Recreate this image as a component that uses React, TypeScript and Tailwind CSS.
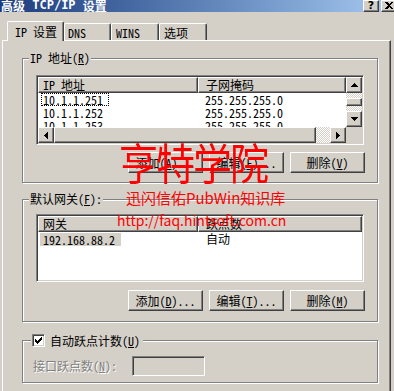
import React from "react";

const font = "font-['Noto_Sans_Mono_CJK_SC','Noto_Sans_CJK_SC',sans-serif]";
const raised =
  "border border-t-white border-l-white border-r-[#404040] border-b-[#404040] shadow-[inset_-1px_-1px_0_#808080] bg-[#d4d0c8]";
const sunken =
  "border border-t-[#808080] border-l-[#808080] border-r-white border-b-white shadow-[inset_1px_1px_0_#404040,inset_-1px_-1px_0_#d4d0c8] p-px";
const dither = "[background:repeating-conic-gradient(#fff_0%_25%,#d4d0c8_0%_50%)_0_0/2px_2px]";

const arrows = {
  up: { w: 7, h: 4, d: "M3 0h1v1h1v1h1v1h1v1H0V3h1V2h1V1h1z" },
  down: { w: 7, h: 4, d: "M0 0h7v1H6v1H5v1H4v1H3V3H2V2H1V1H0z" },
  left: { w: 4, h: 7, d: "M3 0h1v7H3V6H2V5H1V4H0V3h1V2h1V1h1z" },
  right: { w: 4, h: 7, d: "M0 0h1v1h1v1h1v1h1v1H3v1H2v1H1v1H0z" },
};

function ScrollBtn({ dir }: { dir: keyof typeof arrows }) {
  const a = arrows[dir];
  return (
    <div className={`${raised} w-[16px] h-[16px] shrink-0 flex items-center justify-center`}>
      <svg width={a.w} height={a.h} viewBox={`0 0 ${a.w} ${a.h}`} shapeRendering="crispEdges">
        <path d={a.d} fill="#000" />
      </svg>
    </div>
  );
}

function Key({ k }: { k: string }) {
  return (
    <>
      (<u className="underline-offset-[1px]">{k}</u>)
    </>
  );
}

function Btn({ label, k, dots }: { label: string; k: string; dots?: boolean }) {
  return (
    <div className={`${raised} w-[75px] h-[21px] flex items-center justify-center`}>
      {label}
      <Key k={k} />
      {dots ? "..." : ""}
    </div>
  );
}

function HeaderCell({ text, className }: { text: string; className: string }) {
  return <div className={`${raised} h-[16px] flex items-center ${className}`}>{text}</div>;
}

function Group({
  legend,
  legendClass,
  className,
  children,
}: {
  legend: React.ReactNode;
  legendClass: string;
  className: string;
  children: React.ReactNode;
}) {
  return (
    <fieldset
      className={`ml-[19px] w-[356px] border border-[#808080] shadow-[inset_1px_1px_0_#fff,1px_1px_0_#fff] ${className}`}
    >
      <legend className={`bg-[#d4d0c8] leading-[12px] ${legendClass}`}>{legend}</legend>
      {children}
    </fieldset>
  );
}

function Check() {
  const px = [
    [6, 0], [5, 1], [6, 1], [0, 2], [4, 2], [5, 2], [6, 2],
    [0, 3], [1, 3], [3, 3], [4, 3], [5, 3],
    [0, 4], [1, 4], [2, 4], [3, 4], [4, 4],
    [1, 5], [2, 5], [3, 5], [2, 6],
  ];
  return (
    <div className={`${sunken} w-[13px] h-[13px] bg-white flex items-center justify-center`}>
      <svg width="7" height="7" viewBox="0 0 7 7" shapeRendering="crispEdges">
        {px.map(([x, y]) => (
          <rect key={`${x}-${y}`} x={x} y={y} width="1" height="1" fill="#000" />
        ))}
      </svg>
    </div>
  );
}

const ipRows = ["10.1.1.251", "10.1.1.252", "10.1.1.253"];

export default function App() {
  return (
    <div
      className={`${font} relative w-[394px] h-[391px] overflow-hidden bg-[#d4d0c8] text-[12px] leading-[12px] text-black`}
    >
      {/* title bar */}
      <div className="h-[12px] flex items-end bg-linear-to-r from-[#1c3b7d] to-[#a6caf0]">
        <div className="self-start pl-px font-bold text-white whitespace-pre flex leading-[11px]">
          <span>高级</span>
          <span className="font-['DejaVu_Sans_Mono',monospace]"> TCP/IP </span>
          <span>设置</span>
        </div>
        <div className="ml-auto flex gap-[2px] pl-[2px]">
          <div className={`${raised} w-[16px] h-[12px] flex items-end justify-center font-['DejaVu_Sans',sans-serif] font-bold text-[11px] leading-[11px]`}>
            ?
          </div>
          <div className={`${raised} w-[16px] h-[12px] flex items-end justify-center pb-[2px] -mr-[3px]`}>
            <svg width="8" height="7" viewBox="0 0 8 7" shapeRendering="crispEdges">
              <path d="M0 0h2l2 2 2-2h2L5 3.5 8 7H6L4 5 2 7H0l3-3.5z" fill="#000" />
            </svg>
          </div>
        </div>
      </div>

      {/* tabs */}
      <div className="flex items-end h-[28px] pl-[7px]">
        <div className="relative z-10 -mb-px h-[20px] w-[57px] bg-[#d4d0c8] border-t border-l border-r border-t-white border-l-white border-r-[#404040] shadow-[inset_-1px_0_0_#808080] rounded-t-[2px] pt-[4px] pl-[7px] whitespace-pre">
          IP 设置
        </div>
        <div className="h-[17px] w-[47px] border-t border-l border-r border-t-white border-l-white border-r-[#404040] shadow-[inset_-1px_0_0_#808080] rounded-t-[2px] pt-[3px] pl-[3px]">
          DNS
        </div>
        <div className="h-[17px] w-[48px] border-t border-l border-r border-t-white border-l-white border-r-[#404040] shadow-[inset_-1px_0_0_#808080] rounded-t-[2px] pt-[3px] pl-[4px]">
          WINS
        </div>
        <div className="h-[17px] w-[48px] border-t border-l border-r border-t-white border-l-white border-r-[#404040] shadow-[inset_-1px_0_0_#808080] rounded-t-[2px] pt-[3px] pl-[4px]">
          选项
        </div>
      </div>

      {/* panel */}
      <div className="ml-[2px] w-[389px] h-[360px] border-t border-l border-r border-t-white border-l-white border-r-[#404040] shadow-[inset_-1px_0_0_#808080]">
        {/* IP addresses */}
        <Group
          className="mt-[11px]"
          legendClass="ml-[6px] px-px whitespace-pre"
          legend={
            <>
              IP 地址<Key k="R" />
            </>
          }
        >
          <div className="px-[13px] pt-[11px] pb-[9px]">
            <div className={`${sunken} bg-white w-[328px] h-[70px] flex flex-col`}>
              <div className="flex h-[50px]">
                <div className="w-[308px] flex flex-col overflow-hidden">
                  <div className="flex shrink-0">
                    <HeaderCell text="IP 地址" className="w-[160px] pl-[4px] whitespace-pre" />
                    <HeaderCell text="子网掩码" className="flex-1 pl-[7px]" />
                  </div>
                  {ipRows.map((ip, i) => (
                    <div key={ip} className="flex h-[13px] shrink-0 items-center">
                      <div className="w-[160px] pl-[3px]">
                        <span
                          className={`inline-block pl-px pr-[5px] leading-[11px] border ${
                            i === 0 ? "border-dotted border-black" : "border-transparent"
                          }`}
                        >
                          {ip}
                        </span>
                      </div>
                      <div className="pl-[7px]">255.255.255.0</div>
                    </div>
                  ))}
                </div>
                <div className="w-[16px] flex flex-col">
                  <ScrollBtn dir="up" />
                  <div className={`h-[18px] ${dither} pt-[5px]`}>
                    <div className={`${raised} h-[8px]`} />
                  </div>
                  <ScrollBtn dir="down" />
                </div>
              </div>
              <div className="flex h-[16px]">
                <ScrollBtn dir="left" />
                <div className={`${raised} w-[262px] h-[16px]`} />
                <div className={`flex-1 ${dither}`} />
                <ScrollBtn dir="right" />
                <div className="w-[16px] bg-[#d4d0c8]" />
              </div>
            </div>
            <div className="mt-[7px] -mr-px flex justify-end gap-[6px]">
              <Btn label="添加" k="A" dots />
              <Btn label="编辑" k="E" dots />
              <Btn label="删除" k="V" />
            </div>
          </div>
        </Group>

        {/* gateways */}
        <Group
          className="mt-[10px]"
          legendClass="ml-[6px] px-px"
          legend={
            <>
              默认网关<Key k="F" />:
            </>
          }
        >
          <div className="px-[13px] pt-[9px] pb-[10px]">
            <div className={`${sunken} bg-white w-[328px] h-[68px] flex flex-col overflow-hidden`}>
              <div className="flex shrink-0">
                <HeaderCell text="网关" className="w-[160px] pl-[4px]" />
                <HeaderCell text="跃点数" className="flex-1 pl-[7px]" />
              </div>
              <div className="flex h-[14px] items-center">
                <div className="w-[160px] pl-[2px]">
                  <span className="inline-block bg-[#d4d0c8] pl-[3px] pr-[6px] leading-[13px]">192.168.88.2</span>
                </div>
                <div className="pl-[8px]">自动</div>
              </div>
            </div>
            <div className="mt-[8px] -mr-px flex justify-end gap-[6px]">
              <Btn label="添加" k="D" dots />
              <Btn label="编辑" k="T" dots />
              <Btn label="删除" k="M" />
            </div>
          </div>
        </Group>

        {/* metric */}
        <Group
          className="mt-[12px]"
          legendClass="ml-[8px] pl-px pr-[3px] flex items-center gap-[5px]"
          legend={
            <>
              <Check />
              <span>
                自动跃点计数<Key k="U" />
              </span>
            </>
          }
        >
          <div className="pl-[10px] pt-[9px] pb-[6px] flex items-center">
            <div className="w-[99px] text-[#808080] [text-shadow:1px_1px_0_#fff]">
              接口跃点数<Key k="N" />:
            </div>
            <div className={`${sunken} w-[73px] h-[20px] bg-[#d4d0c8]`} />
          </div>
        </Group>
      </div>

      {/* watermark */}
      <div className="absolute left-[119px] top-[140px] origin-top scale-y-[1.12] font-['Noto_Sans_CJK_SC',sans-serif] text-[39px] leading-none tracking-[-2px] text-[#ff0000] pointer-events-none whitespace-nowrap">
        亨特学院
      </div>
      <div className="absolute left-[126px] top-[190px] font-['Noto_Sans_CJK_SC',sans-serif] text-[15px] leading-none text-[#ff0000] pointer-events-none whitespace-nowrap">
        迅闪信佑PubWin知识库
      </div>
      <div className="absolute left-[117px] top-[213px] font-['Noto_Sans_CJK_SC',sans-serif] text-[14px] leading-none text-[#ff0000] pointer-events-none whitespace-nowrap">
        http://faq.hintsoft.com.cn
      </div>
    </div>
  );
}
